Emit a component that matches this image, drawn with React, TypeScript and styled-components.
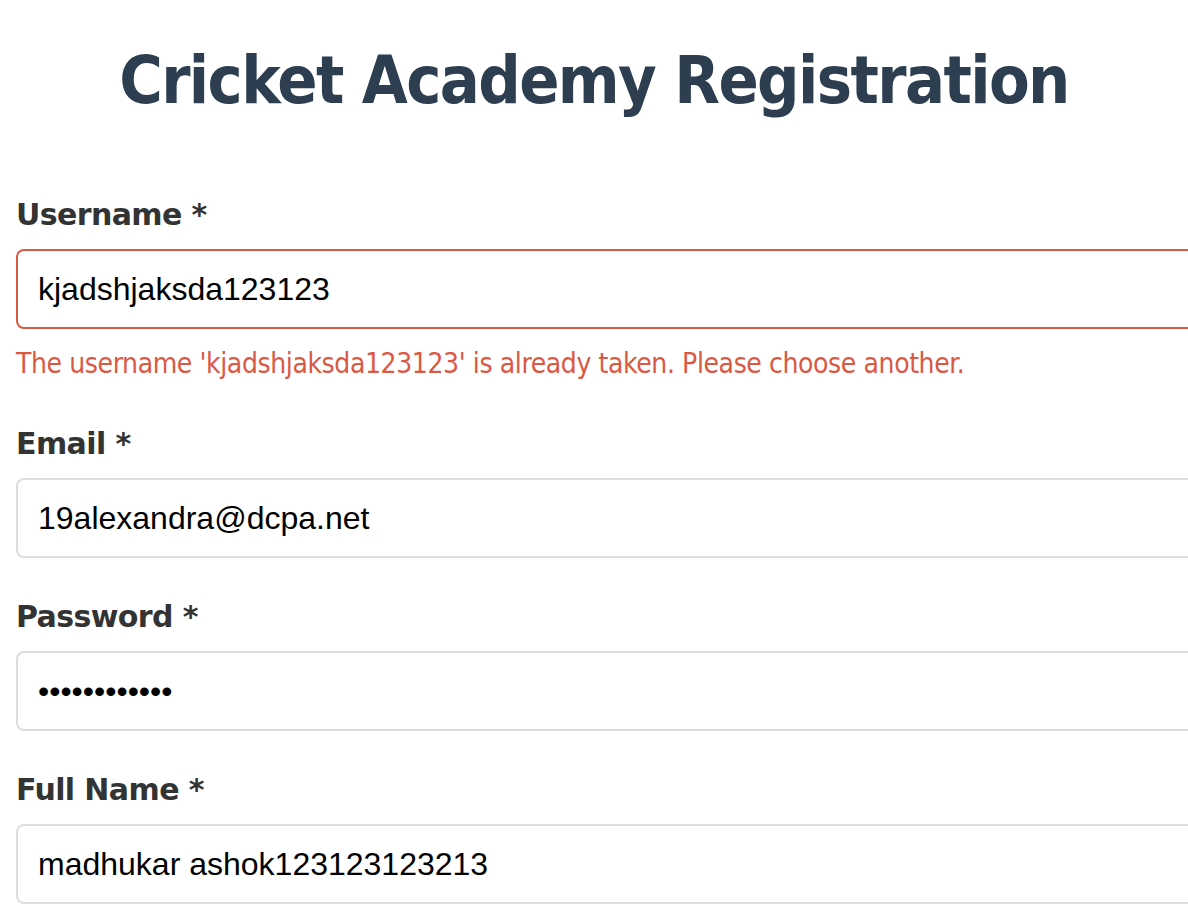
import React from "react";
import styled, { createGlobalStyle } from "styled-components";

const GlobalStyle = createGlobalStyle`
  html, body {
    margin: 0;
    padding: 0;
    background: #ffffff;
    overflow-x: hidden;
  }
  body {
    font-family: "DejaVu Sans", Verdana, sans-serif;
  }
`;

const Page = styled.div`
  width: 1188px;
  box-sizing: border-box;
  padding: 42px 16px 0 16px;
`;

const Title = styled.h1`
  margin: 0 0 78px 0;
  text-align: center;
  font-family: "DejaVu Sans Condensed", "DejaVu Sans", Verdana, sans-serif;
  font-stretch: condensed;
  font-weight: 700;
  font-size: 66px;
  line-height: 77px;
  letter-spacing: -1.6px;
  color: #2c3e50;
`;

const Form = styled.form`
  display: flex;
  flex-direction: column;
  gap: 41px;
`;

const Group = styled.div`
  display: flex;
  flex-direction: column;
`;

const Label = styled.label`
  display: block;
  margin: 0 0 16px 0;
  font-family: "DejaVu Sans", Verdana, sans-serif;
  font-weight: 700;
  font-size: 30px;
  line-height: 36px;
  letter-spacing: -0.6px;
  color: #333333;
`;

const Input = styled.input<{ $error?: boolean }>`
  display: block;
  width: 100%;
  box-sizing: content-box;
  height: 36px;
  padding: 20px;
  border: 2px solid ${(p) => (p.$error ? "#da5945" : "#dddddd")};
  border-radius: 8px;
  background: #ffffff;
  font-family: "Liberation Sans", Arial, sans-serif;
  font-size: 32px;
  color: #000000;
  outline: none;
`;

const ErrorText = styled.div`
  margin: 18px 0 4px 0;
  font-family: "DejaVu Sans Condensed", "DejaVu Sans", Verdana, sans-serif;
  font-stretch: condensed;
  font-size: 28px;
  line-height: 34px;
  letter-spacing: -0.4px;
  color: #da5945;
`;

type Field = {
  id: string;
  label: string;
  type: string;
  value: string;
  error?: string;
};

const fields: Field[] = [
  {
    id: "username",
    label: "Username *",
    type: "text",
    value: "kjadshjaksda123123",
    error: "The username 'kjadshjaksda123123' is already taken. Please choose another.",
  },
  { id: "email", label: "Email *", type: "email", value: "19alexandra@dcpa.net" },
  { id: "password", label: "Password *", type: "password", value: "abcdefghijkl" },
  { id: "fullname", label: "Full Name *", type: "text", value: "madhukar ashok123123123213" },
];

export default function App() {
  return (
    <>
      <GlobalStyle />
      <Page>
        <Title>Cricket Academy Registration</Title>
        <Form onSubmit={(e) => e.preventDefault()}>
          {fields.map((f) => (
            <Group key={f.id}>
              <Label htmlFor={f.id}>{f.label}</Label>
              <Input id={f.id} type={f.type} defaultValue={f.value} $error={!!f.error} />
              {f.error && <ErrorText>{f.error}</ErrorText>}
            </Group>
          ))}
        </Form>
      </Page>
    </>
  );
}
